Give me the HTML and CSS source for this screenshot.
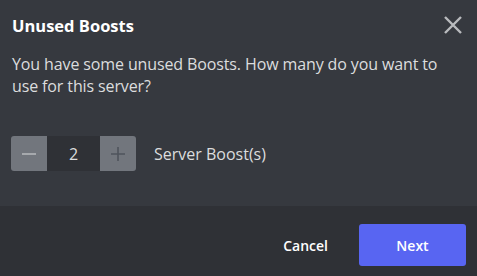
FILE: index.html
```html
<!DOCTYPE html>
<html lang="en">
<head>
  <meta charset="UTF-8">
  <title>Unused Boosts</title>
  <link rel="stylesheet" href="styles.css">
</head>
<body>

<div class="modal">
  <div class="modal-body">
    <header>
      <h2>Unused Boosts</h2>
      <button class="close-button" aria-label="Close">
        <svg width="24" height="24" viewBox="0 0 24 24">
          <path d="M4 4 L20 20 M20 4 L4 20" stroke="currentColor" stroke-width="2.4" fill="none"/>
        </svg>
      </button>
    </header>
    <p class="description">You have some unused Boosts. How many do you want to use for this server?</p>
    <div class="picker">
      <div class="stepper">
        <button class="step minus">
          <svg width="16" height="16" viewBox="0 0 16 16"><path d="M1 8 H15" stroke="currentColor" stroke-width="1.6"/></svg>
        </button>
        <span class="count">2</span>
        <button class="step plus" disabled>
          <svg width="16" height="16" viewBox="0 0 16 16"><path d="M1 8 H15 M8 1 V15" stroke="currentColor" stroke-width="1.6"/></svg>
        </button>
      </div>
      <span class="picker-label">Server Boost(s)</span>
    </div>
  </div>
  <footer>
    <button class="cancel">Cancel</button>
    <button class="next">Next</button>
  </footer>
</div>

</body>
</html>
```

FILE: styles.css
```css
body {
  margin: 0;
  background-color: #36393f;
  font-family: "Open Sans", "Noto Sans", sans-serif;
}

.modal {
  width: 477px;
  height: 276px;
  display: flex;
  flex-direction: column;
}

.modal-body {
  flex: 1;
  padding: 0 12px;
}

.modal-body header {
  display: flex;
  justify-content: space-between;
  align-items: center;
  height: 48px;
}

.modal-body h2 {
  margin: 3px 0 0;
  font-size: 16.5px;
  font-weight: 700;
  color: #ffffff;
}

.close-button {
  background: transparent;
  border: none;
  padding: 0;
  margin-right: 0;
  margin-top: 1px;
  color: #b9bbbe;
  cursor: pointer;
  display: flex;
}

.description {
  margin: 5px 0 0;
  font-size: 16px;
  line-height: 22px;
  letter-spacing: -0.12px;
  color: #dcddde;
}

.picker {
  display: flex;
  align-items: center;
  gap: 18px;
  margin-top: 39px;
  margin-left: -1px;
}

.stepper {
  display: flex;
  height: 35px;
  border-radius: 3px;
  overflow: hidden;
}

.step {
  width: 36px;
  border: none;
  padding: 0;
  background-color: #72767d;
  display: flex;
  align-items: center;
  justify-content: center;
}

.minus {
  color: #b9bbbe;
}

.plus {
  color: #4f545c;
}

.count {
  width: 53px;
  background-color: #2f3136;
  color: #dcddde;
  font-size: 16px;
  display: flex;
  align-items: center;
  justify-content: center;
}

.picker-label {
  font-size: 16px;
  color: #dcddde;
}

footer {
  height: 70px;
  box-sizing: border-box;
  background-color: #2f3136;
  display: flex;
  justify-content: flex-end;
  align-items: center;
  gap: 8px;
  padding: 8px 11px 0 0;
}

footer button {
  border: none;
  border-radius: 3px;
  font-family: inherit;
  font-size: 14px;
  font-weight: 600;
  color: #ffffff;
  height: 42px;
  cursor: pointer;
}

.cancel {
  background: transparent;
  padding: 0 23px;
}

.next {
  width: 107px;
  background-color: #5865f2;
}
```
